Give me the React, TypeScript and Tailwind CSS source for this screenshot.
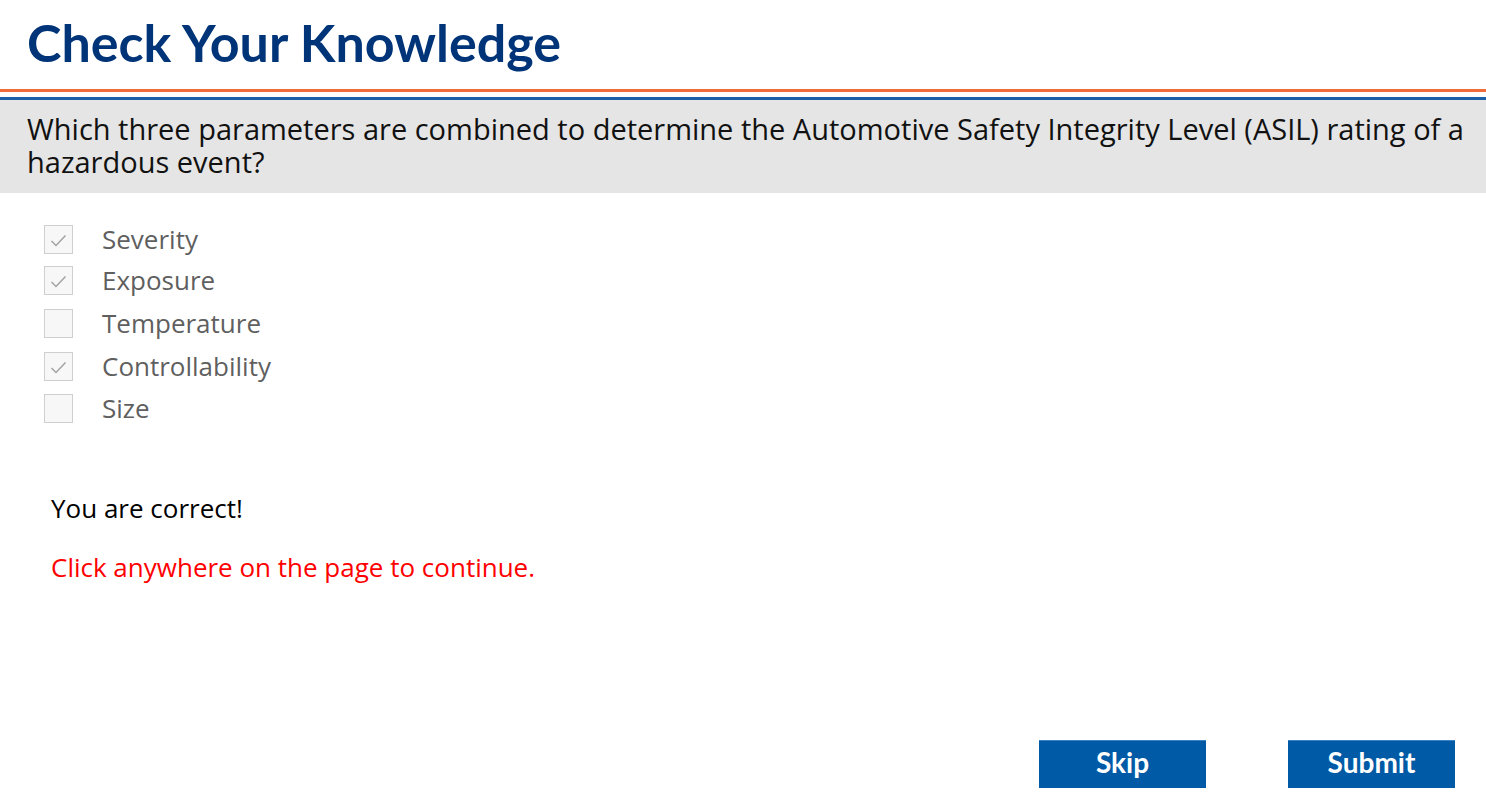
import React from "react";

const options = [
  { label: "Severity", checked: true, h: "h-[42px]" },
  { label: "Exposure", checked: true, h: "h-[41px]" },
  { label: "Temperature", checked: false, h: "h-[44px]" },
  { label: "Controllability", checked: true, h: "h-[42px]" },
  { label: "Size", checked: false, h: "h-[42px]" },
];

function Box({ checked }: { checked: boolean }) {
  return (
    <div className="w-[29px] h-[29px] shrink-0 border border-[#cfcfcf] bg-[#f7f7f7]">
      {checked && (
        <svg width="27" height="27" viewBox="0 0 27 27" className="block">
          <path d="M6.5 15 L11 19.5 L20.5 9.5" fill="none" stroke="#a3a3a3" strokeWidth="1.5" />
        </svg>
      )}
    </div>
  );
}

export default function App() {
  return (
    <div className="w-[1486px] h-[808px] bg-white flex flex-col" style={{ fontFamily: "'Open Sans', Lato, sans-serif" }}>
      <div className="h-[89px] pl-[27px] flex items-center">
        <h1 className="text-[52px] font-bold text-[#003478] leading-none -mt-[6px] font-['Lato',sans-serif]">Check Your Knowledge</h1>
      </div>
      <div className="h-[3px] bg-[#f26b3a]" />
      <div className="h-[5px] bg-white" />
      <div className="h-[3px] bg-[#1a5fa8]" />
      <div className="h-[93px] bg-[#e5e5e5] pl-[27px] pr-[16px] pt-[12px]">
        <p className="text-[29px] leading-[33px] text-[#111]">
          Which three parameters are combined to determine the Automotive Safety Integrity Level (ASIL) rating of a hazardous event?
        </p>
      </div>
      <div className="pl-[44px] pt-[25px] flex flex-col">
        {options.map((o) => (
          <div key={o.label} className={`flex items-center ${o.h}`}>
            <Box checked={o.checked} />
            <span className="ml-[29px] text-[26px] text-[#5f5f5f]">{o.label}</span>
          </div>
        ))}
      </div>
      <div className="pl-[51px] pt-[64px] text-[26px]">
        <p className="text-black leading-[30px]">You are correct!</p>
        <p className="text-[#ff0000] leading-[30px] mt-[29px]">Click anywhere on the page to continue.</p>
      </div>
      <div className="flex-1" />
      <div className="flex justify-end gap-[82px] pr-[31px] pb-[20px] font-['Lato',sans-serif]">
        <button className="w-[167px] h-[48px] bg-[#005aa5] border-t border-[#3a82c2] text-white font-bold text-[28px] leading-none pb-[6px]">Skip</button>
        <button className="w-[167px] h-[48px] bg-[#005aa5] border-t border-[#3a82c2] text-white font-bold text-[28px] leading-none pb-[6px]">Submit</button>
      </div>
    </div>
  );
}
